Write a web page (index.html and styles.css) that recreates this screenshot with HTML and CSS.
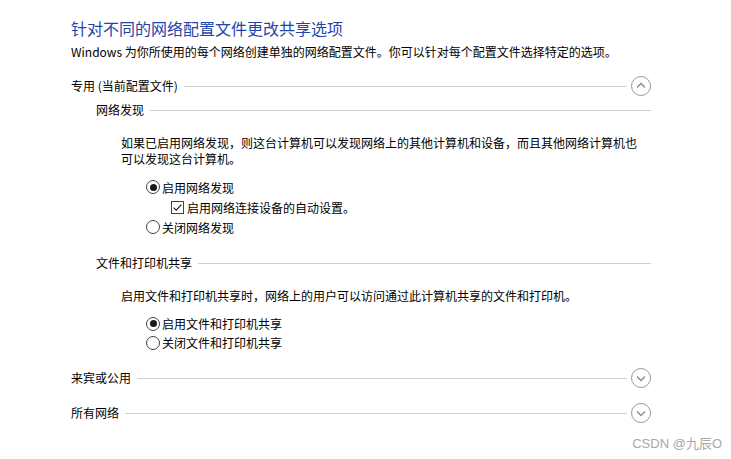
FILE: index.html
```html
<!DOCTYPE html>
<html lang="zh-CN">
<head>
    <meta charset="UTF-8">
    <title>高级共享设置</title>
    <link rel="stylesheet" href="styles.css">
</head>
<body>
    <div class="page">
        <h1 class="title">针对不同的网络配置文件更改共享选项</h1>
        <p class="intro">Windows 为你所使用的每个网络创建单独的网络配置文件。你可以针对每个配置文件选择特定的选项。</p>

        <!-- 专用 -->
        <div class="group-head">
            <span class="label">专用 (当前配置文件)</span>
            <span class="rule"></span>
            <span class="toggle">
                <svg width="20" height="20" viewBox="0 0 20 20"><circle cx="10" cy="10" r="9.5" fill="none" stroke="#9a9a9a"/><path d="M6 11.5 L10 7.5 L14 11.5" fill="none" stroke="#8a8a8a" stroke-width="1.3"/></svg>
            </span>
        </div>

        <div class="section">
            <div class="sub-head sub-first">
                <span class="label">网络发现</span>
                <span class="rule"></span>
            </div>
            <p class="desc desc-first">如果已启用网络发现，则这台计算机可以发现网络上的其他计算机和设备，而且其他网络计算机也可以发现这台计算机。</p>
            <div class="options">
                <div class="opt"><span class="radio checked"></span>启用网络发现</div>
                <div class="opt opt-nested"><span class="check">
                    <svg width="13" height="13" viewBox="0 0 13 13"><rect x="0.5" y="0.5" width="12" height="12" fill="#fff" stroke="#444"/><path d="M2.6 6.6 L5.2 9.2 L10.4 3.6" fill="none" stroke="#222" stroke-width="1.2"/></svg>
                </span>启用网络连接设备的自动设置。</div>
                <div class="opt"><span class="radio"></span>关闭网络发现</div>
            </div>

            <div class="sub-head">
                <span class="label">文件和打印机共享</span>
                <span class="rule"></span>
            </div>
            <p class="desc">启用文件和打印机共享时，网络上的用户可以访问通过此计算机共享的文件和打印机。</p>
            <div class="options options-tight">
                <div class="opt"><span class="radio checked"></span>启用文件和打印机共享</div>
                <div class="opt"><span class="radio"></span>关闭文件和打印机共享</div>
            </div>
        </div>

        <div class="group-head group-gap">
            <span class="label">来宾或公用</span>
            <span class="rule"></span>
            <span class="toggle">
                <svg width="20" height="20" viewBox="0 0 20 20"><circle cx="10" cy="10" r="9.5" fill="none" stroke="#9a9a9a"/><path d="M6 8.5 L10 12.5 L14 8.5" fill="none" stroke="#8a8a8a" stroke-width="1.3"/></svg>
            </span>
        </div>

        <div class="group-head group-gap2">
            <span class="label">所有网络</span>
            <span class="rule"></span>
            <span class="toggle">
                <svg width="20" height="20" viewBox="0 0 20 20"><circle cx="10" cy="10" r="9.5" fill="none" stroke="#9a9a9a"/><path d="M6 8.5 L10 12.5 L14 8.5" fill="none" stroke="#8a8a8a" stroke-width="1.3"/></svg>
            </span>
        </div>
    </div>

    <div class="watermark">CSDN @九辰O</div>
</body>
</html>
```

FILE: styles.css
```css
body {
    margin: 0;
    padding: 0;
    background: #fff;
    font-family: "Noto Sans CJK SC", "Noto Sans", sans-serif;
    font-size: 12px;
    color: #000;
    width: 731px;
    height: 459px;
    overflow: hidden;
    position: relative;
}

.page {
    padding: 17px 0 0 71px;
    width: 580px;
}

.title {
    margin: 0;
    font-size: 16px;
    font-weight: normal;
    line-height: 22px;
    color: #1e46a8;
}

.intro {
    margin: 5px 0 0;
    line-height: 16px;
}

.group-head,
.sub-head {
    display: flex;
    align-items: center;
    height: 20px;
}

.group-head {
    margin-top: 16px;
}

.group-gap {
    margin-top: 16px;
}

.group-gap2 {
    margin-top: 15px;
}

.label {
    white-space: nowrap;
    line-height: 20px;
}

.rule {
    flex: 1;
    height: 1px;
    background: #cfcfcf;
    margin-left: 6px;
}

.toggle {
    width: 20px;
    height: 20px;
    margin-left: 4px;
    display: flex;
}

.section {
    padding-left: 25px;
}

.sub-head {
    margin-top: 16px;
}

.sub-first {
    margin-top: 4px;
}

.desc {
    margin: 15px 0 0;
    padding-left: 25px;
    line-height: 16px;
    width: 520px;
}

.options {
    margin-top: 10px;
    padding-left: 50px;
}

.opt {
    display: flex;
    align-items: center;
    height: 20px;
}

.options-tight .opt {
    height: 19px;
}

.opt-nested {
    padding-left: 25px;
}

.radio {
    width: 12px;
    height: 12px;
    border: 1px solid #444;
    border-radius: 50%;
    margin-right: 2px;
    position: relative;
    flex: none;
    background: #fff;
}

.radio.checked::after {
    content: "";
    position: absolute;
    left: 2.5px;
    top: 2.5px;
    width: 7px;
    height: 7px;
    border-radius: 50%;
    background: #1a1a1a;
}

.check {
    display: flex;
    margin-right: 3px;
}

.watermark {
    position: absolute;
    right: 9px;
    top: 435px;
    font-family: "Liberation Sans", "Noto Sans CJK SC", sans-serif;
    font-size: 13px;
    line-height: 17px;
    color: #a8a8a8;
}
```
